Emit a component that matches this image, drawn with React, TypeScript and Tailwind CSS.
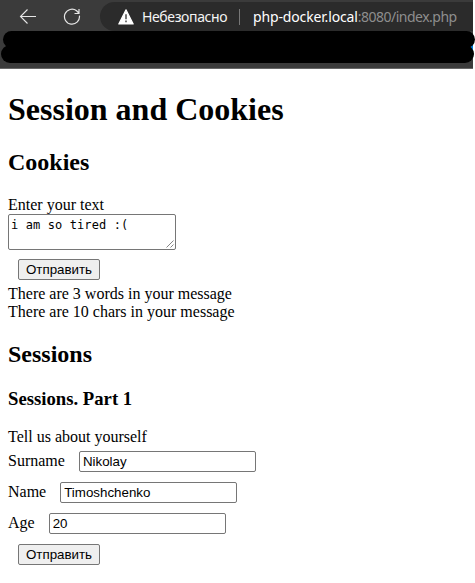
import React from "react";

function BrowserBar() {
  return (
    <header className="relative h-[69px] w-[473px] border-b border-[#686868] bg-[#3b3b3b] font-['Noto_Sans',sans-serif]">
      <div className="flex h-[33px] items-start">
        <svg className="ml-[19px] mt-[8px] shrink-0" width="18" height="17" viewBox="0 0 18 17" fill="none" stroke="#e6e6e6" strokeWidth="1.1">
          <path d="M17 8.5H1.5M8.5 1.5l-7 7 7 7" />
        </svg>
        <svg className="ml-[26px] mt-[8px] shrink-0" width="19" height="18" viewBox="0 0 19 18" fill="none" stroke="#e6e6e6" strokeWidth="1.2">
          <path d="M16.4 7.6A7.5 7.5 0 1 1 13.6 2.8L15.8 5M16 1v4.5h-4.5" />
        </svg>
        <div className="ml-[18px] mt-[2px] flex h-[29px] flex-1 items-center rounded-l-full bg-[#2b2b2b] text-[14px] whitespace-nowrap">
          <svg className="ml-[18px] shrink-0" width="16" height="16" viewBox="0 0 16 16">
            <path d="M8 .8 15.2 15H.8Z" fill="#fff" stroke="#fff" strokeWidth="1.2" strokeLinejoin="round" />
            <path d="M8 5.2v5M8 11.5v1.8" stroke="#4a4a4a" strokeWidth="1.5" />
          </svg>
          <span className="ml-[8px] w-[85px] tracking-[-0.38px] text-[#f4f4f4]">Небезопасно</span>
          <span className="ml-[12px] h-[16px] w-px bg-[#777]" />
          <span className="ml-[13px] tracking-[-0.15px] text-white">
            php-docker.local<span className="tracking-[-0.5px] text-[#8e8e8e]">:8080/index.php</span>
          </span>
        </div>
      </div>
      <div className="absolute top-[45px] left-[471px] h-[5px] w-[2px] bg-[#0078d4]" />
      <div className="absolute top-[31px] left-[3px] h-[17px] w-[472px] rounded-full bg-black" />
      <div className="absolute top-[45px] left-px h-[18px] w-[473px] rounded-full bg-black" />
    </header>
  );
}

function Submit() {
  return (
    <button className="ml-[10px] block h-[21px] w-[82px] rounded-[2px] border border-[#767676] bg-[#efefef] text-center font-['Liberation_Sans',sans-serif] text-[13.333px] leading-[19px]">
      Отправить
    </button>
  );
}

function Field({ label, value }: { label: string; value: string }) {
  return (
    <label className="mb-[10px] flex h-[21px] items-start">
      <span className="mt-px leading-[18px]">{label}</span>
      <input
        defaultValue={value}
        className="ml-[14px] h-[21px] w-[177px] rounded-[2px] border border-[#767676] bg-white px-[3px] font-['Liberation_Sans',sans-serif] text-[13.333px] leading-[15px]"
      />
    </label>
  );
}

export default function App() {
  return (
    <div className="h-[583px] w-[475px] overflow-hidden bg-white font-['Liberation_Serif',serif] text-[16px] leading-[18px] text-black">
      <BrowserBar />
      <main className="px-[8px] pt-[22px]">
        <h1 className="text-[32px] leading-[37px] font-bold">Session and Cookies</h1>
        <h2 className="mt-[21px] text-[24px] leading-[27px] font-bold">Cookies</h2>
        <p className="mt-[20px]">Enter your text</p>
        <div className="relative mb-[9px] h-[36px] w-[168px]">
          <textarea
            defaultValue="i am so tired :("
            className="block h-[36px] w-[168px] resize-none overflow-hidden rounded-[2px] border border-[#767676] bg-white px-[2px] pt-[3px] font-['DejaVu_Sans_Mono',monospace] text-[12px] leading-[15px] tracking-[0.11px]"
          />
          <svg className="absolute right-[2px] bottom-[2px]" width="8" height="8" viewBox="0 0 8 8" stroke="#666" strokeWidth="0.8">
            <path d="M0.5 7.5l7-7M4.5 7.5l3-3" />
          </svg>
        </div>
        <Submit />
        <p className="mt-[5px]">There are 3 words in your message</p>
        <p>There are 10 chars in your message</p>
        <h2 className="mt-[20px] text-[24px] leading-[27px] font-bold">Sessions</h2>
        <h3 className="mt-[20px] text-[18.72px] leading-[21px] font-bold">Sessions. Part 1</h3>
        <p className="mt-[19px] mb-[5px]">Tell us about yourself</p>
        <Field label="Surname" value="Nikolay" />
        <Field label="Name" value="Timoshchenko" />
        <Field label="Age" value="20" />
        <Submit />
      </main>
    </div>
  );
}
